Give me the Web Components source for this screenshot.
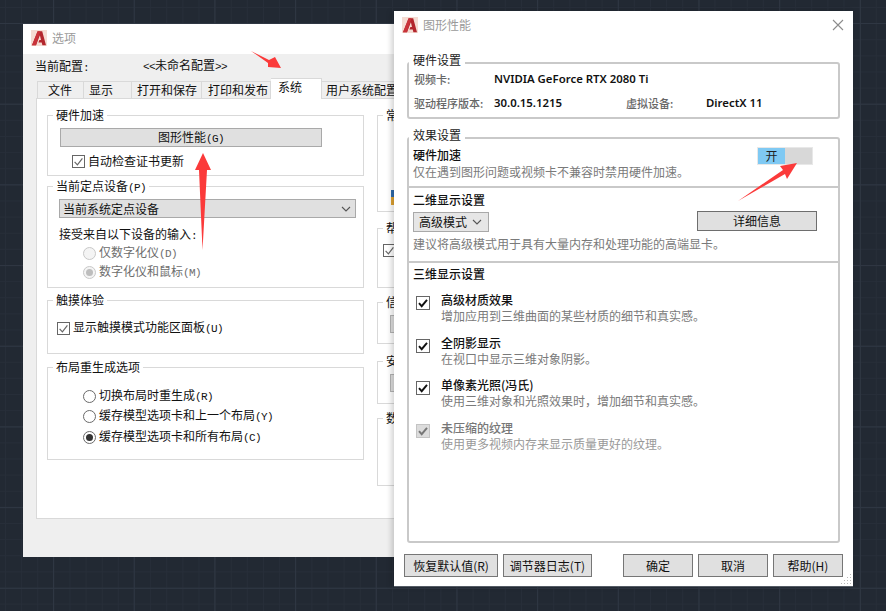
<!DOCTYPE html>
<html lang="zh-CN">
<head>
<meta charset="utf-8">
<title>图形性能</title>
<style>
  html, body { margin: 0; background: #222933; }
</style>
</head>
<body>
<cad-desktop>
  <options-dialog></options-dialog>
  <graphics-dialog></graphics-dialog>
  <red-arrows></red-arrows>
</cad-desktop>

<script>
// small helper, every component is just a shadow root with fixed markup
const component = (tag, html) => {
  customElements.define(tag, class extends HTMLElement {
    constructor() {
      super();
      this.attachShadow({ mode: 'open' }).innerHTML = html;
    }
  });
};

const CJK = '"Noto Sans CJK SC", "Noto Sans", sans-serif';

component('cad-desktop', `
  <style>
    :host {
      display: block;
      position: relative;
      width: 886px;
      height: 611px;
      overflow: hidden;
      background-color: #222933;
      background-image:
        linear-gradient(#2f3743 1px, transparent 1px),
        linear-gradient(90deg, #2f3743 1px, transparent 1px),
        linear-gradient(#272e39 1px, transparent 1px),
        linear-gradient(90deg, #272e39 1px, transparent 1px);
      background-size: 80.7px 80.7px, 80.7px 80.7px, 16.14px 16.14px, 16.14px 16.14px;
      background-position: 0 23px, 53px 0, 0 7px, 5px 0;
    }
  </style>
  <slot></slot>
`);

component('cad-logo', `
  <style>
    :host { display: block; width: 16px; height: 16px; flex: none; }
    svg { display: block; }
  </style>
  <svg width="16" height="16" viewBox="0 0 16 16">
    <rect width="16" height="16" fill="#f5dcd3"/>
    <path d="M1 15.2 6.6 1.2h4.6L15 15.2h-3.6l-.7-2.6H7.4l1-2.6h1.6L8.9 5.2 5 15.2z" fill="#b3262d"/>
    <path d="M6.6 1.2h2.8L5 15.2H1z" fill="#c9333a"/>
  </svg>
`);

component('cad-titlebar', `
  <style>
    :host {
      display: flex;
      align-items: center;
      gap: 5px;
      height: 30px;
      flex: none;
      box-sizing: border-box;
      padding: 0 9px 2px 8px;
      background: #fff;
      color: #9a9a9a;
    }
    .text { flex: 1; }
  </style>
  <cad-logo></cad-logo>
  <div class="text"><slot></slot></div>
  <slot name="close"></slot>
`);

// box with the title sitting on its top border
component('opt-group', `
  <style>
    :host {
      display: block;
      position: relative;
      box-sizing: border-box;
      border: 1px solid #d9d9d9;
      flex: none;
    }
    .label {
      position: absolute;
      top: -9px;
      left: 5px;
      padding: 0 3px;
      background: #fff;
      white-space: nowrap;
    }
  </style>
  <div class="label"><slot name="label"></slot></div>
  <slot></slot>
`);

component('cad-btn', `
  <style>
    :host {
      display: flex;
      align-items: center;
      justify-content: center;
      box-sizing: border-box;
      flex: none;
      background: #e0e0e0;
      border: 1px solid var(--btn-border, #a9a9a9);
      white-space: nowrap;
    }
  </style>
  <div><slot></slot></div>
`);

component('cad-select', `
  <style>
    :host {
      display: flex;
      align-items: center;
      justify-content: space-between;
      box-sizing: border-box;
      flex: none;
      background: #e0e0e0;
      border: 1px solid #a9a9a9;
      padding: 0 4px 0 3px;
      white-space: nowrap;
    }
    svg { display: block; }
  </style>
  <div><slot></slot></div>
  <svg width="10" height="6" viewBox="0 0 10 6"><path d="M1 1l4 4 4-4" fill="none" stroke="#555" stroke-width="1.1"/></svg>
`);

component('cad-check', `
  <style>
    :host { display: block; width: 13px; height: 13px; flex: none; }
    svg { display: block; }
  </style>
  <svg width="13" height="13" viewBox="0 0 13 13">
    <rect x=".5" y=".5" width="12" height="12" fill="#fff" stroke="#666"/>
    <path d="M2.6 6.8l2.8 3 5-6.4" fill="none" stroke="#666" stroke-width="1.2"/>
  </svg>
`);

component('cad-radio', `
  <style>
    :host {
      display: flex;
      align-items: center;
      gap: 3px;
      height: 16px;
      white-space: nowrap;
    }
    .ring {
      width: 13px;
      height: 13px;
      box-sizing: border-box;
      border: 1px solid #6a6a6a;
      border-radius: 50%;
      background: #fff;
      display: flex;
      align-items: center;
      justify-content: center;
      flex: none;
    }
    .dot { width: 7px; height: 7px; border-radius: 50%; background: #333; display: none; }
    :host([checked]) .dot { display: block; }
    :host([disabled]) { color: #6d6d6d; }
    :host([disabled]) .ring { border-color: #c8c8c8; background: #f4f4f4; }
    :host([disabled]) .dot { background: #bdbdbd; }
  </style>
  <div class="ring"><div class="dot"></div></div>
  <div><slot></slot></div>
`);

component('cad-tab', `
  <style>
    :host {
      display: block;
      box-sizing: border-box;
      height: 17px;
      line-height: 16px;
      flex: none;
      background: #efefef;
      border: 1px solid #d9d9d9;
      border-bottom: 0;
      border-left-width: 0;
      white-space: nowrap;
    }
    :host([active]) {
      height: 21px;
      margin-bottom: -1px;
      background: #fff;
      position: relative;
      line-height: 16px;
    }
  </style>
  <slot></slot>
`);

component('hw-toggle', `
  <style>
    :host {
      display: flex;
      box-sizing: border-box;
      width: 56px;
      height: 18px;
      border: 1px solid #e8e8e8;
      background: #d8d8d8;
      flex: none;
      color: #222;
    }
    .on {
      width: 27px;
      background: #7fc9f3;
      text-align: center;
      line-height: 16px;
    }
  </style>
  <div class="on"><slot></slot></div>
`);

component('perf-item', `
  <style>
    :host {
      display: flex;
      gap: 11px;
      padding-left: 3px;
      line-height: 15px;
    }
    .box { width: 14px; height: 14px; margin-top: 4px; flex: none; }
    svg { display: block; }
    ::slotted(*) { display: block; }
    .title { font-weight: 500; color: #111; height: 16px; white-space: nowrap; }
    .desc { color: #7a7a7a; white-space: nowrap; }
    :host([disabled]) .title { color: #777; }
    :host([disabled]) .desc { color: #999; }
    :host([disabled]) rect { fill: #dcdcdc; stroke: #c4c4c4; }
    :host([disabled]) path { stroke: #777; }
  </style>
  <div class="box">
    <svg width="14" height="14" viewBox="0 0 14 14">
      <rect x=".5" y=".5" width="13" height="13" fill="#fff" stroke="#666"/>
      <path d="M3 7.2l2.7 3L11 3.8" fill="none" stroke="#111" stroke-width="1.9"/>
    </svg>
  </div>
  <div>
    <div class="title"><slot name="title"></slot></div>
    <div class="desc"><slot name="desc"></slot></div>
  </div>
`);

component('options-dialog', `
  <style>
    :host {
      position: absolute;
      left: 23px;
      top: 24px;
      width: 400px;
      height: 533px;
      display: flex;
      flex-direction: column;
      background: #efefef;
      color: #111;
      font: 12px/16px ${CJK};
    }
    .m { font: 11px/16px "Liberation Mono", monospace; letter-spacing: -.6px; }
    .profile { display: flex; align-items: center; height: 24px; padding-left: 12px; flex: none; }
    .profile div:first-child { width: 108px; margin-top: 2px; }
    .tabs { display: flex; align-items: flex-end; height: 20px; margin-left: 14px; flex: none; }
    .panel {
      display: flex;
      gap: 13px;
      box-sizing: border-box;
      height: 421px;
      margin-left: 13px;
      padding: 16px 0 0 10px;
      background: #fff;
      border: 1px solid #d9d9d9;
      flex: none;
    }
    .col { display: flex; flex-direction: column; width: 317px; flex: none; }
    .col.right { width: 100px; }
    .row { display: flex; align-items: center; gap: 3px; height: 16px; white-space: nowrap; }
    .sliver { width: 6px; height: 15px; margin: 74px 0 0 13px; background: linear-gradient(#2f6cae 50%, #e0a332 50%); }
    .grey { width: 20px; height: 18px; margin: 12px 0 0 12px; background: #e0e0e0; border: 1px solid #b5b5b5; box-sizing: border-box; }
  </style>
  <cad-titlebar>选项</cad-titlebar>
  <div class="profile">
    <div>当前配置<span class="m">:</span></div>
    <div><span class="m">&lt;&lt;</span>未命名配置<span class="m">&gt;&gt;</span></div>
  </div>
  <div class="tabs">
    <cad-tab style="width:47px;padding-left:10px;border-left-width:1px">文件</cad-tab>
    <cad-tab style="width:48px;padding-left:5px">显示</cad-tab>
    <cad-tab style="width:70px;padding-left:5px">打开和保存</cad-tab>
    <cad-tab style="width:69px;padding-left:6px">打印和发布</cad-tab>
    <cad-tab active style="width:51px;padding-left:7px">系统</cad-tab>
    <cad-tab style="width:85px;padding-left:4px">用户系统配置</cad-tab>
  </div>
  <div class="panel">
    <div class="col">
      <opt-group style="height:61px;padding:12px 0 0 12px">
        <span slot="label">硬件加速</span>
        <cad-btn style="width:262px;height:19px">图形性能<span class="m">(G)</span></cad-btn>
        <div class="row" style="margin:6px 0 0 12px"><cad-check></cad-check><span>自动检查证书更新</span></div>
      </opt-group>
      <opt-group style="height:102px;margin-top:10px;padding:12px 0 0 11px">
        <span slot="label">当前定点设备<span class="m">(P)</span></span>
        <cad-select style="width:297px;height:19px">当前系统定点设备</cad-select>
        <div class="row" style="margin-top:9px"><span>接受来自以下设备的输入<span class="m">:</span></span></div>
        <cad-radio disabled style="margin:2px 0 0 24px">仅数字化仪<span class="m">(D)</span></cad-radio>
        <cad-radio disabled checked style="margin:3px 0 0 24px">数字化仪和鼠标<span class="m">(M)</span></cad-radio>
      </opt-group>
      <opt-group style="height:54px;margin-top:12px;padding:19px 0 0 9px">
        <span slot="label">触摸体验</span>
        <div class="row"><cad-check></cad-check><span>显示触摸模式功能区面板<span class="m">(U)</span></span></div>
      </opt-group>
      <opt-group style="height:93px;margin-top:13px;padding:20px 0 0 35px">
        <span slot="label">布局重生成选项</span>
        <cad-radio>切换布局时重生成<span class="m">(R)</span></cad-radio>
        <cad-radio style="margin-top:4px">缓存模型选项卡和上一个布局<span class="m">(Y)</span></cad-radio>
        <cad-radio checked style="margin-top:5px">缓存模型选项卡和所有布局<span class="m">(C)</span></cad-radio>
      </opt-group>
    </div>
    <div class="col right">
      <opt-group style="height:97px">
        <span slot="label">常</span>
        <div class="sliver"></div>
      </opt-group>
      <opt-group style="height:60px;margin-top:16px;padding:15px 0 0 5px">
        <span slot="label">帮</span>
        <cad-check></cad-check>
      </opt-group>
      <opt-group style="height:42px;margin-top:14px">
        <span slot="label">信</span>
        <div class="grey"></div>
      </opt-group>
      <opt-group style="height:43px;margin-top:17px">
        <span slot="label">安</span>
        <div class="grey"></div>
      </opt-group>
      <opt-group style="height:68px;margin-top:14px">
        <span slot="label">数</span>
      </opt-group>
    </div>
  </div>
`);

component('graphics-dialog', `
  <style>
    :host {
      position: absolute;
      left: 394px;
      top: 11px;
      width: 459px;
      height: 576px;
      display: flex;
      flex-direction: column;
      background: #fff;
      color: #111;
      font: 12px/16px ${CJK};
      box-shadow: -3px 0 5px rgba(0,0,0,.16);
      border-bottom: 1px solid #555c66;
      box-sizing: border-box;
    }
    .frame {
      position: relative;
      box-sizing: border-box;
      margin-left: 13px;
      width: 433px;
      border: 2px solid #c9c9c9;
      border-radius: 3px;
      flex: none;
    }
    .legend {
      position: absolute;
      top: -12px;
      left: 0;
      padding: 0 4px;
      background: #fff;
      color: #222;
    }
    .hw { display: grid; grid-template-columns: 80px 132px 80px 1fr; row-gap: 8px; padding: 7px 0 0 5px; font-weight: 500; color: #666; font-size: 11px; }
    .hw b { font: 600 11.4px/16px "Noto Sans", sans-serif; color: #111; white-space: nowrap; }
    .sec { box-sizing: border-box; padding: 0 0 0 4px; border-bottom: 2px solid #c9c9c9; }
    .sec:last-child { border-bottom: 0; }
    .head { font-weight: 500; color: #111; }
    .desc { color: #7a7a7a; white-space: nowrap; }
    .accel { display: flex; justify-content: space-between; height: 49px; padding: 8px 25px 0 4px; }
    .accel .desc { margin-top: 1px; }
    .two { height: 75px; padding-top: 4px; }
    .two .line { display: flex; align-items: flex-start; margin-top: 3px; height: 21px; }
    .three { padding-top: 3px; display: flex; flex-direction: column; gap: 11.5px; }
    .three .head { margin-bottom: -1.5px; }
    .foot { display: flex; gap: 5px; margin-top: 11px; padding-left: 10px; --btn-border: #767676; flex: none; }
    .foot cad-btn { height: 23px; }
    .grip { position: absolute; right: 1px; bottom: 1px; display: block; }
    .close { display: block; }
  </style>
  <cad-titlebar>图形性能
    <svg class="close" slot="close" width="12" height="12" viewBox="0 0 12 12"><path d="M1 1l10 10M11 1L1 11" stroke="#8c8c8c" stroke-width="1.1" fill="none"/></svg>
  </cad-titlebar>
  <div class="frame" style="height:57px;margin-top:21px">
    <div class="legend">硬件设置</div>
    <div class="hw">
      <div>视频卡:</div><b style="grid-column:span 3">NVIDIA GeForce RTX 2080 Ti</b>
      <div>驱动程序版本:</div><b>30.0.15.1215</b><div>虚拟设备:</div><b>DirectX 11</b>
    </div>
  </div>
  <div class="frame" style="height:406px;margin-top:18px">
    <div class="legend">效果设置</div>
    <div class="sec accel">
      <div>
        <div class="head">硬件加速</div>
        <div class="desc">仅在遇到图形问题或视频卡不兼容时禁用硬件加速。</div>
      </div>
      <hw-toggle>开</hw-toggle>
    </div>
    <div class="sec two">
      <div class="head">二维显示设置</div>
      <div class="line">
        <cad-select style="width:76px;height:20px;margin-top:1px;padding:0 6px 0 5px;background:#e6e6e6">高级模式</cad-select>
        <cad-btn style="width:120px;height:20px;margin-left:208px;--btn-border:#6e6e6e">详细信息</cad-btn>
      </div>
      <div class="desc" style="margin-top:4px">建议将高级模式用于具有大量内存和处理功能的高端显卡。</div>
    </div>
    <div class="sec three">
      <div class="head">三维显示设置</div>
      <perf-item><span slot="title">高级材质效果</span><span slot="desc">增加应用到三维曲面的某些材质的细节和真实感。</span></perf-item>
      <perf-item><span slot="title">全阴影显示</span><span slot="desc">在视口中显示三维对象阴影。</span></perf-item>
      <perf-item><span slot="title">单像素光照(冯氏)</span><span slot="desc">使用三维对象和光照效果时，增加细节和真实感。</span></perf-item>
      <perf-item disabled><span slot="title">未压缩的纹理</span><span slot="desc">使用更多视频内存来显示质量更好的纹理。</span></perf-item>
    </div>
  </div>
  <div class="foot">
    <cad-btn style="width:94px">恢复默认值(R)</cad-btn>
    <cad-btn style="width:89px">调节器日志(T)</cad-btn>
    <cad-btn style="width:70px;margin-left:26px">确定</cad-btn>
    <cad-btn style="width:70px">取消</cad-btn>
    <cad-btn style="width:70px">帮助(H)</cad-btn>
  </div>
  <svg class="grip" width="11" height="11" viewBox="0 0 11 11" fill="#b9b9b9">
    <rect x="9" y="0" width="1" height="1"/>
    <rect x="6" y="3" width="1" height="1"/><rect x="9" y="3" width="1" height="1"/>
    <rect x="3" y="6" width="1" height="1"/><rect x="6" y="6" width="1" height="1"/><rect x="9" y="6" width="1" height="1"/>
    <rect x="0" y="9" width="1" height="1"/><rect x="3" y="9" width="1" height="1"/><rect x="6" y="9" width="1" height="1"/><rect x="9" y="9" width="1" height="1"/>
  </svg>
`);

// annotation arrows painted over the screenshot
component('red-arrows', `
  <style>
    :host { position: absolute; left: 0; top: 0; display: block; pointer-events: none; }
    svg { display: block; }
  </style>
  <svg width="886" height="611" viewBox="0 0 886 611" fill="#fb3a3a">
    <polygon points="251,51 269,60 275,57 281,68 268,67 268,63"/>
    <polygon points="203,153 211,170 207,170 202.5,250 199,170 195,170"/>
    <polygon points="797,163 780,166 783,170 738,201 785,174 787,179"/>
  </svg>
`);
</script>
</body>
</html>
